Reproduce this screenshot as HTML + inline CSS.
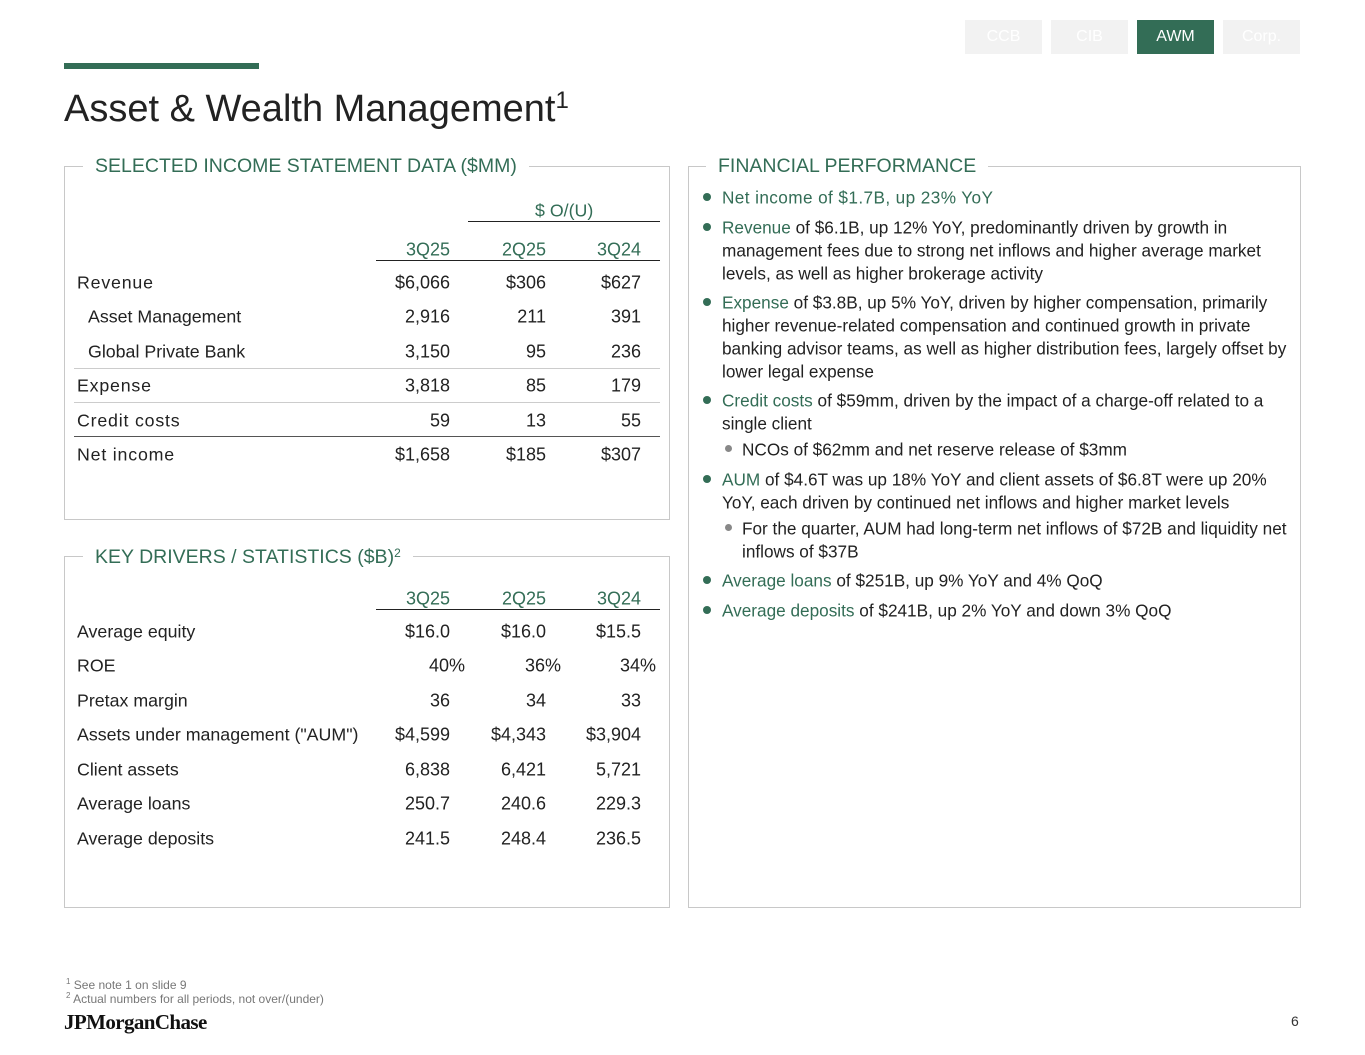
<!DOCTYPE html><html><head><meta charset="utf-8"><style>
body{margin:0;width:1365px;height:1055px;background:#fff;font-family:"Liberation Sans",sans-serif;color:#222;position:relative;overflow:hidden}
.a{position:absolute;white-space:nowrap}
.g{color:#336d56}
.tab{position:absolute;top:20px;width:77px;height:34px;background:#f2f2f2;color:#fff;font-size:16px;text-align:center;line-height:34px}
.box{position:absolute;border:1px solid #c8c8c8}
.lg{position:absolute;background:#fff;padding:0 12px;font-size:19.5px;color:#336d56}
.r{position:absolute;font-size:17.8px;transform:translateY(-50%);white-space:nowrap}
.n{position:absolute;font-size:18px;transform:translate(-100%,-50%);text-align:right}
.hl{position:absolute;height:1px;background:#222}
.t{position:absolute;font-size:17.2px;left:722px;transform:translateY(-50%);white-space:nowrap}
.d{position:absolute;width:8px;height:8px;border-radius:50%;background:#336d56}
.d2{position:absolute;width:7px;height:7px;border-radius:50%;background:#888}
</style></head><body>
<div class="tab" style="left:965px">CCB</div>
<div class="tab" style="left:1051px">CIB</div>
<div class="tab" style="left:1137px;background:#336d56">AWM</div>
<div class="tab" style="left:1223px">Corp.</div>
<div class="a" style="left:64px;top:63px;width:195px;height:6px;background:#336d56"></div>
<div class="a" style="left:64px;top:88px;font-size:38px;color:#222">Asset &amp; Wealth Management<sup style="font-size:24px;vertical-align:13px;line-height:0">1</sup></div>

<div class="box" style="left:64px;top:166px;width:604px;height:352px"></div>
<div class="lg" style="left:83px;top:155px">SELECTED INCOME STATEMENT DATA ($MM)</div>
<div class="r g" style="left:535px;top:211px">$ O/(U)</div>
<div class="hl" style="left:468px;top:221px;width:192px"></div>
<div class="n g" style="left:450px;top:250px">3Q25</div><div class="n g" style="left:546px;top:250px">2Q25</div><div class="n g" style="left:641px;top:250px">3Q24</div>
<div class="hl" style="left:376px;top:260px;width:284px"></div>
<div class="r" style="left:77px;top:283px;letter-spacing:.8px">Revenue</div><div class="n" style="left:450px;top:283px">$6,066</div><div class="n" style="left:546px;top:283px">$306</div><div class="n" style="left:641px;top:283px">$627</div>
<div class="r" style="left:88px;top:317px">Asset Management</div><div class="n" style="left:450px;top:317px">2,916</div><div class="n" style="left:546px;top:317px">211</div><div class="n" style="left:641px;top:317px">391</div>
<div class="r" style="left:88px;top:352px">Global Private Bank</div><div class="n" style="left:450px;top:352px">3,150</div><div class="n" style="left:546px;top:352px">95</div><div class="n" style="left:641px;top:352px">236</div>
<div class="hl" style="left:74px;top:368px;width:586px;background:#ccc"></div>
<div class="r" style="left:77px;top:386px;letter-spacing:.8px">Expense</div><div class="n" style="left:450px;top:386px">3,818</div><div class="n" style="left:546px;top:386px">85</div><div class="n" style="left:641px;top:386px">179</div>
<div class="hl" style="left:74px;top:402px;width:586px;background:#ccc"></div>
<div class="r" style="left:77px;top:421px;letter-spacing:.8px">Credit costs</div><div class="n" style="left:450px;top:421px">59</div><div class="n" style="left:546px;top:421px">13</div><div class="n" style="left:641px;top:421px">55</div>
<div class="hl" style="left:74px;top:436px;width:586px;background:#555"></div>
<div class="r" style="left:77px;top:455px;letter-spacing:.8px">Net income</div><div class="n" style="left:450px;top:455px">$1,658</div><div class="n" style="left:546px;top:455px">$185</div><div class="n" style="left:641px;top:455px">$307</div>

<div class="box" style="left:64px;top:556px;width:604px;height:350px"></div>
<div class="lg" style="left:83px;top:546px">KEY DRIVERS / STATISTICS ($B)<sup style="font-size:12px;vertical-align:6px;line-height:0">2</sup></div>
<div class="n g" style="left:450px;top:599px">3Q25</div><div class="n g" style="left:546px;top:599px">2Q25</div><div class="n g" style="left:641px;top:599px">3Q24</div>
<div class="hl" style="left:376px;top:609px;width:284px"></div>
<div class="r" style="left:77px;top:632px">Average equity</div><div class="n" style="left:450px;top:632px">$16.0</div><div class="n" style="left:546px;top:632px">$16.0</div><div class="n" style="left:641px;top:632px">$15.5</div>
<div class="r" style="left:77px;top:666px">ROE</div><div class="n" style="left:465px;top:666px">40%</div><div class="n" style="left:561px;top:666px">36%</div><div class="n" style="left:656px;top:666px">34%</div>
<div class="r" style="left:77px;top:701px">Pretax margin</div><div class="n" style="left:450px;top:701px">36</div><div class="n" style="left:546px;top:701px">34</div><div class="n" style="left:641px;top:701px">33</div>
<div class="r" style="left:77px;top:735px">Assets under management ("AUM")</div><div class="n" style="left:450px;top:735px">$4,599</div><div class="n" style="left:546px;top:735px">$4,343</div><div class="n" style="left:641px;top:735px">$3,904</div>
<div class="r" style="left:77px;top:770px">Client assets</div><div class="n" style="left:450px;top:770px">6,838</div><div class="n" style="left:546px;top:770px">6,421</div><div class="n" style="left:641px;top:770px">5,721</div>
<div class="r" style="left:77px;top:804px">Average loans</div><div class="n" style="left:450px;top:804px">250.7</div><div class="n" style="left:546px;top:804px">240.6</div><div class="n" style="left:641px;top:804px">229.3</div>
<div class="r" style="left:77px;top:839px">Average deposits</div><div class="n" style="left:450px;top:839px">241.5</div><div class="n" style="left:546px;top:839px">248.4</div><div class="n" style="left:641px;top:839px">236.5</div>

<div class="box" style="left:688px;top:166px;width:611px;height:740px"></div>
<div class="lg" style="left:706px;top:155px">FINANCIAL PERFORMANCE</div>
<div class="d" style="left:703px;top:193px"></div><div class="t g" style="top:198px;letter-spacing:.4px">Net income of $1.7B, up 23% YoY</div>
<div class="d" style="left:703px;top:223px"></div><div class="t" style="top:228px"><span class="g">Revenue</span> of $6.1B, up 12% YoY, predominantly driven by growth in</div>
<div class="t" style="top:251px">management fees due to strong net inflows and higher average market</div>
<div class="t" style="top:274px">levels, as well as higher brokerage activity</div>
<div class="d" style="left:703px;top:298px"></div><div class="t" style="top:303px"><span class="g">Expense</span> of $3.8B, up 5% YoY, driven by higher compensation, primarily</div>
<div class="t" style="top:326px">higher revenue-related compensation and continued growth in private</div>
<div class="t" style="top:349px">banking advisor teams, as well as higher distribution fees, largely offset by</div>
<div class="t" style="top:372px">lower legal expense</div>
<div class="d" style="left:703px;top:396px"></div><div class="t" style="top:401px"><span class="g">Credit costs</span> of $59mm, driven by the impact of a charge-off related to a</div>
<div class="t" style="top:424px">single client</div>
<div class="d2" style="left:725px;top:445px"></div><div class="t" style="left:742px;top:450px">NCOs of $62mm and net reserve release of $3mm</div>
<div class="d" style="left:703px;top:475px"></div><div class="t" style="top:480px"><span class="g">AUM</span> of $4.6T was up 18% YoY and client assets of $6.8T were up 20%</div>
<div class="t" style="top:503px">YoY, each driven by continued net inflows and higher market levels</div>
<div class="d2" style="left:725px;top:524px"></div><div class="t" style="left:742px;top:529px">For the quarter, AUM had long-term net inflows of $72B and liquidity net</div>
<div class="t" style="left:742px;top:552px">inflows of $37B</div>
<div class="d" style="left:703px;top:576px"></div><div class="t" style="top:581px"><span class="g">Average loans</span> of $251B, up 9% YoY and 4% QoQ</div>
<div class="d" style="left:703px;top:606px"></div><div class="t" style="top:611px"><span class="g">Average deposits</span> of $241B, up 2% YoY and down 3% QoQ</div>

<div class="a" style="left:66px;top:977px;font-size:12px;color:#777"><sup style="font-size:8px">1</sup> See note 1 on slide 9</div>
<div class="a" style="left:66px;top:991px;font-size:12px;color:#777"><sup style="font-size:8px">2</sup> Actual numbers for all periods, not over/(under)</div>
<div class="a" style="left:64px;top:1010px;font-family:'Liberation Serif',serif;font-size:21px;color:#111;letter-spacing:-0.6px;font-weight:bold">JPMorganChase</div>
<div class="a" style="left:1291px;top:1013px;font-size:14px;color:#333">6</div>
</body></html>
